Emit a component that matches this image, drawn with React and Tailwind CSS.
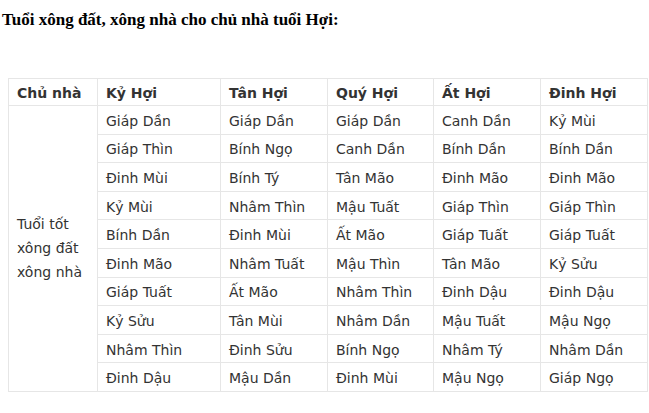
import React from 'react';

const cols = ['Kỷ Hợi', 'Tân Hợi', 'Quý Hợi', 'Ất Hợi', 'Đinh Hợi'];

const rows = [
    ['Giáp Dần', 'Giáp Dần', 'Giáp Dần', 'Canh Dần', 'Kỷ Mùi'],
    ['Giáp Thìn', 'Bính Ngọ', 'Canh Dần', 'Bính Dần', 'Bính Dần'],
    ['Đinh Mùi', 'Bính Tý', 'Tân Mão', 'Đinh Mão', 'Đinh Mão'],
    ['Kỷ Mùi', 'Nhâm Thìn', 'Mậu Tuất', 'Giáp Thìn', 'Giáp Thìn'],
    ['Bính Dần', 'Đinh Mùi', 'Ất Mão', 'Giáp Tuất', 'Giáp Tuất'],
    ['Đinh Mão', 'Nhâm Tuất', 'Mậu Thìn', 'Tân Mão', 'Kỷ Sửu'],
    ['Giáp Tuất', 'Ất Mão', 'Nhâm Thìn', 'Đinh Dậu', 'Đinh Dậu'],
    ['Kỷ Sửu', 'Tân Mùi', 'Nhâm Dần', 'Mậu Tuất', 'Mậu Ngọ'],
    ['Nhâm Thìn', 'Đinh Sửu', 'Bính Ngọ', 'Nhâm Tý', 'Nhâm Dần'],
    ['Đinh Dậu', 'Mậu Dần', 'Đinh Mùi', 'Mậu Ngọ', 'Giáp Ngọ'],
];

const widths = ['w-[89px]', 'w-[123px]', 'w-[107px]', 'w-[106px]', 'w-[107px]', 'w-[107px]'];

export default function App() {
    return (
        <div className="bg-white w-[649px] h-[413px] overflow-hidden">
            <h2 className="font-['Liberation_Serif',serif] font-bold text-[17px] leading-5 text-black pl-[2px] pt-[10px]">
                Tuổi xông đất, xông nhà cho chủ nhà tuổi Hợi:
            </h2>

            <table className="ml-[8px] mt-[48px] table-fixed border-collapse w-[639px] font-['DejaVu_Sans',Verdana,sans-serif] text-[14px] text-[#333]">
                <colgroup>
                    {widths.map((w, i) => (
                        <col key={i} className={w} />
                    ))}
                </colgroup>
                <thead>
                    <tr className="h-[27px]">
                        <th className="border border-[#e6e6e6] px-2 pt-[2px] text-left font-bold">Chủ nhà</th>
                        {cols.map((c) => (
                            <th key={c} className="border border-[#e6e6e6] px-2 pt-[2px] text-left font-bold">
                                {c}
                            </th>
                        ))}
                    </tr>
                </thead>
                <tbody>
                    {rows.map((r, i) => (
                        <tr key={i} className="h-[28.6px]">
                            {i === 0 && (
                                <td rowSpan={10} className="border border-[#e6e6e6] px-2 align-middle leading-6">
                                    Tuổi tốt xông đất xông nhà
                                </td>
                            )}
                            {r.map((v, j) => (
                                <td key={j} className="border border-[#e6e6e6] px-2 pt-[3px]">
                                    {v}
                                </td>
                            ))}
                        </tr>
                    ))}
                </tbody>
            </table>
        </div>
    );
}
